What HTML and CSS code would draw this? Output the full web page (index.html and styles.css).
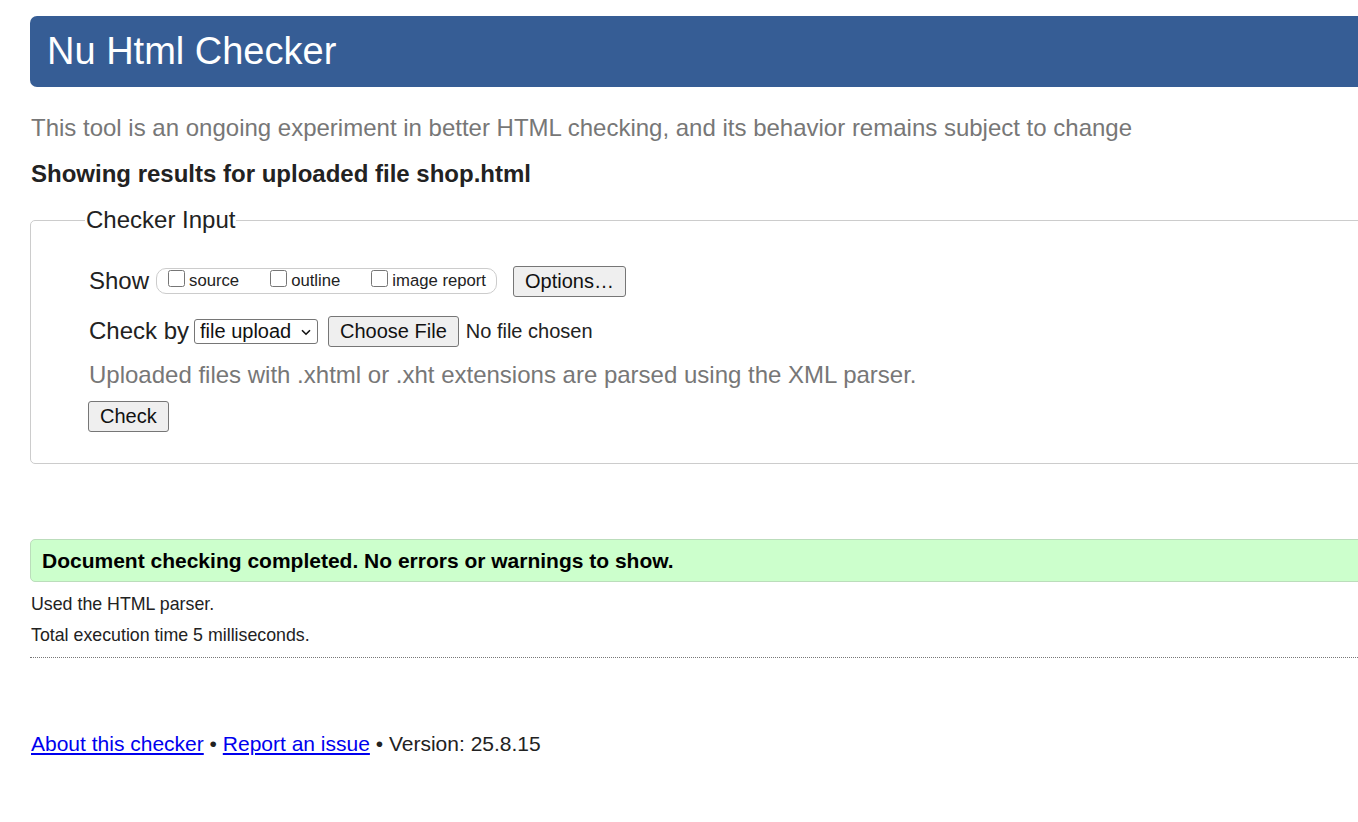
FILE: index.html
```html
<!DOCTYPE html>
<html lang="en">
<head>
<meta charset="utf-8">
<title>Showing results for shop.html - Nu Html Checker</title>
<link rel="stylesheet" href="styles.css">
</head>
<body>
<div class="page">
  <h1 class="banner">Nu Html Checker</h1>
  <p class="intro">This tool is an ongoing experiment in better HTML checking, and its behavior remains subject to change</p>
  <p class="showing">Showing results for uploaded file shop.html</p>
  <fieldset class="input">
    <legend class="legend">Checker Input</legend>
    <div class="row row-show">
      <span class="label">Show</span>
      <span class="checks">
        <label class="check"><input type="checkbox" class="cb">source</label>
        <label class="check"><input type="checkbox" class="cb">outline</label>
        <label class="check"><input type="checkbox" class="cb">image report</label>
      </span>
      <button class="btn btn-options" type="button">Options…</button>
    </div>
    <div class="row row-by">
      <span class="label label-by">Check by</span>
      <span class="sel-wrap">
        <select class="sel"><option>file upload</option></select>
        <svg class="chev" width="10" height="7" viewBox="0 0 10 7"><path d="M1 1.2 L5 5.2 L9 1.2" fill="none" stroke="#111" stroke-width="1.6"/></svg>
      </span>
      <span class="file"><button class="btn btn-file" type="button">Choose File</button><span class="nofile">No file chosen</span></span>
    </div>
    <p class="hint">Uploaded files with .xhtml or .xht extensions are parsed using the XML parser.</p>
    <div class="row row-submit"><button class="btn btn-check" type="button">Check</button></div>
  </fieldset>
  <div class="success">Document checking completed. No errors or warnings to show.</div>
  <p class="details">Used the HTML parser.</p>
  <p class="details details-2">Total execution time 5 milliseconds.</p>
  <hr class="rule">
  <p class="footer"><a href="#" class="link">About this checker</a> • <a href="#" class="link">Report an issue</a> • Version: 25.8.15</p>
</div>
</body>
</html>
```
FILE: styles.css
```css
html, body {
  margin: 0;
  padding: 0;
  overflow: hidden;
  background: #fff;
}
body {
  font-family: "Liberation Sans", Arial, sans-serif;
  color: #222;
}
.page {
  width: 1400px;
  margin-left: 30px;
  padding-top: 16px;
}
.banner {
  margin: 0;
  background: #365d95;
  color: #fff;
  font-weight: normal;
  font-size: 38px;
  line-height: 71px;
  height: 71px;
  padding-left: 17px;
  border-radius: 7px 0 0 7px;
}
.intro {
  margin: 26px 0 0 1px;
  font-size: 24px;
  line-height: 30px;
  color: #777;
}
.showing {
  margin: 16px 0 0 1px;
  font-size: 24px;
  line-height: 30px;
  font-weight: bold;
  color: #222;
}
.input {
  margin: 17px 0 0 0;
  border: 1px solid #ccc;
  border-radius: 5px 0 0 5px;
  padding: 31px 58px 31px 58px;
}
.legend {
  font-size: 24px;
  line-height: 28px;
  padding: 0 1px;
  margin-left: -4px;
  color: #222;
}
.row {
  display: flex;
  align-items: center;
  font-size: 24px;
}
.row-show {
  height: 32px;
}
.label {
  margin-right: 7px;
}
.label-by {
  margin-right: 5px;
}
.checks {
  display: inline-flex;
  align-items: center;
  border: 1px solid #ccc;
  border-radius: 10px;
  height: 24px;
  padding: 0 10px 0 9px;
  font-size: 16.7px;
  gap: 29px;
}
.check {
  display: inline-flex;
  align-items: center;
}
.cb {
  margin: 0 4px 5px 2px;
  width: 17px;
  height: 17px;
}
.btn {
  font-family: "Liberation Sans", Arial, sans-serif;
  font-size: 20px;
  color: #111;
  background: #efefef;
  border: 1px solid #767676;
  border-radius: 3px;
  padding: 0 11px;
  height: 31px;
}
.btn-options {
  margin-left: 16px;
}
.row-by {
  margin-top: 18px;
  height: 32px;
}
.sel-wrap {
  position: relative;
  display: inline-flex;
  align-items: center;
}
.sel {
  -webkit-appearance: none;
  appearance: none;
  font-family: "Liberation Sans", Arial, sans-serif;
  font-size: 20px;
  height: 25px;
  width: 124px;
  padding: 0 0 0 5px;
  color: #111;
  border: 1px solid #767676;
  border-radius: 3px;
  background: #fff;
}
.chev {
  position: absolute;
  right: 7px;
  top: 10px;
  pointer-events: none;
}
.file {
  display: inline-flex;
  align-items: center;
  margin-left: 10px;
}
.btn-file {
  margin-right: 7px;
}
.nofile {
  font-size: 20px;
}
.hint {
  margin: 13px 0 0 0;
  font-size: 24px;
  line-height: 30px;
  color: #777;
}
.row-submit {
  margin-top: 11px;
}
.btn-check {
  margin-left: -1px;
}
.success {
  margin-top: 75px;
  background: #ccffcc;
  border: 1px solid #bbddbb;
  border-radius: 5px 0 0 5px;
  padding: 0 11px;
  height: 41px;
  line-height: 41px;
  font-size: 21px;
  font-weight: bold;
  color: #000;
}
.details {
  margin: 11px 0 0 1px;
  font-size: 17.8px;
  line-height: 22px;
}
.details-2 {
  margin-top: 9px;
}
.rule {
  margin: 11px 0 0 0;
  border: 0;
  border-top: 1px dotted #777;
  height: 0;
}
.footer {
  margin: 71px 0 0 1px;
  font-size: 21px;
  line-height: 30px;
}
.link {
  color: #0000ee;
}
```
